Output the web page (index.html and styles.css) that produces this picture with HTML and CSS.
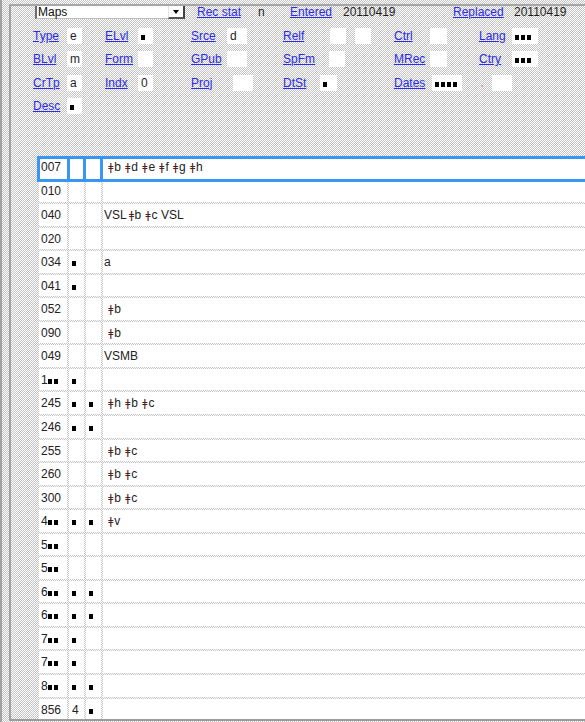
FILE: index.html
```html
<!DOCTYPE html>
<html>
<head>
<meta charset="utf-8">
<link rel="stylesheet" href="styles.css">
</head>
<body>
<div class="app">
  <div class="frame">
    <div class="topbar">
      <div class="cell-sel">
        <div class="select"><span class="sel-text">Maps</span><span class="sel-btn"><i class="tri"></i></span></div>
      </div>
      <a class="lnk">Rec stat</a><span>n</span><a class="lnk">Entered</a><span>20110419</span><a class="lnk">Replaced</a><span>20110419</span>
    </div>

    <div class="fixed">
      <a class="lnk">Type</a><div><span class="v w15">e</span></div>
      <a class="lnk">ELvl</a><div><span class="v w15 off1"><i class="sq"></i></span></div>
      <a class="lnk">Srce</a><div><span class="v w20">d</span></div>
      <a class="lnk">Relf</a><div class="pair"><span class="v w16"></span><span class="v w16"></span></div>
      <a class="lnk">Ctrl</a><div><span class="v w17"></span></div>
      <a class="lnk">Lang</a><div><span class="v w26"><i class="sq"></i><i class="sq"></i><i class="sq"></i></span></div>

      <a class="lnk">BLvl</a><div><span class="v w15">m</span></div>
      <a class="lnk">Form</a><div><span class="v w15 off1"></span></div>
      <a class="lnk">GPub</a><div><span class="v w20"></span></div>
      <a class="lnk">SpFm</a><div><span class="v w16"></span></div>
      <a class="lnk">MRec</a><div><span class="v w17"></span></div>
      <a class="lnk">Ctry</a><div><span class="v w26"><i class="sq"></i><i class="sq"></i><i class="sq"></i></span></div>

      <a class="lnk">CrTp</a><div><span class="v w15">a</span></div>
      <a class="lnk">Indx</a><div><span class="v w15 off1">0</span></div>
      <a class="lnk">Proj</a><div><span class="v w20 off6"></span></div>
      <a class="lnk">DtSt</a><div><span class="v w17 back"><i class="sq"></i></span></div>
      <a class="lnk">Dates</a><div><span class="v w30 off2"><i class="sq"></i><i class="sq"></i><i class="sq"></i><i class="sq"></i></span></div>
      <div class="comma-cell"><span class="comma">,</span><span class="v w33 commabox"></span></div><div></div>

      <a class="lnk">Desc</a><div><span class="v w15"><i class="sq"></i></span></div>
    </div>

    <div class="vars">
      <div class="row sel"><span class="t">007</span><span class="i"></span><span class="i"></span><span class="d"> <b class="sf">ǂ</b>b <b class="sf">ǂ</b>d <b class="sf">ǂ</b>e <b class="sf">ǂ</b>f <b class="sf">ǂ</b>g <b class="sf">ǂ</b>h</span></div>
      <div class="row"><span class="t">010</span><span class="i"></span><span class="i"></span><span class="d"></span></div>
      <div class="row"><span class="t">040</span><span class="i"></span><span class="i"></span><span class="d">VSL <b class="sf tight">ǂ</b>b <b class="sf">ǂ</b>c VSL</span></div>
      <div class="row"><span class="t">020</span><span class="i"></span><span class="i"></span><span class="d"></span></div>
      <div class="row"><span class="t">034</span><span class="i"><i class="sq"></i></span><span class="i"></span><span class="d">a</span></div>
      <div class="row"><span class="t">041</span><span class="i"><i class="sq"></i></span><span class="i"></span><span class="d"></span></div>
      <div class="row"><span class="t">052</span><span class="i"></span><span class="i"></span><span class="d"> <b class="sf">ǂ</b>b</span></div>
      <div class="row"><span class="t">090</span><span class="i"></span><span class="i"></span><span class="d"> <b class="sf">ǂ</b>b</span></div>
      <div class="row"><span class="t">049</span><span class="i"></span><span class="i"></span><span class="d">VSMB</span></div>
      <div class="row"><span class="t">1<i class="sq"></i><i class="sq"></i></span><span class="i"><i class="sq"></i></span><span class="i"></span><span class="d"></span></div>
      <div class="row"><span class="t">245</span><span class="i"><i class="sq"></i></span><span class="i"><i class="sq"></i></span><span class="d"> <b class="sf">ǂ</b>h <b class="sf">ǂ</b>b <b class="sf">ǂ</b>c</span></div>
      <div class="row"><span class="t">246</span><span class="i"><i class="sq"></i></span><span class="i"><i class="sq"></i></span><span class="d"></span></div>
      <div class="row"><span class="t">255</span><span class="i"></span><span class="i"></span><span class="d"> <b class="sf">ǂ</b>b <b class="sf">ǂ</b>c</span></div>
      <div class="row"><span class="t">260</span><span class="i"></span><span class="i"></span><span class="d"> <b class="sf">ǂ</b>b <b class="sf">ǂ</b>c</span></div>
      <div class="row"><span class="t">300</span><span class="i"></span><span class="i"></span><span class="d"> <b class="sf">ǂ</b>b <b class="sf">ǂ</b>c</span></div>
      <div class="row"><span class="t">4<i class="sq"></i><i class="sq"></i></span><span class="i"><i class="sq"></i></span><span class="i"><i class="sq"></i></span><span class="d"> <b class="sf">ǂ</b>v</span></div>
      <div class="row"><span class="t">5<i class="sq"></i><i class="sq"></i></span><span class="i"></span><span class="i"></span><span class="d"></span></div>
      <div class="row"><span class="t">5<i class="sq"></i><i class="sq"></i></span><span class="i"></span><span class="i"></span><span class="d"></span></div>
      <div class="row"><span class="t">6<i class="sq"></i><i class="sq"></i></span><span class="i"><i class="sq"></i></span><span class="i"><i class="sq"></i></span><span class="d"></span></div>
      <div class="row"><span class="t">6<i class="sq"></i><i class="sq"></i></span><span class="i"><i class="sq"></i></span><span class="i"><i class="sq"></i></span><span class="d"></span></div>
      <div class="row"><span class="t">7<i class="sq"></i><i class="sq"></i></span><span class="i"><i class="sq"></i></span><span class="i"></span><span class="d"></span></div>
      <div class="row"><span class="t">7<i class="sq"></i><i class="sq"></i></span><span class="i"><i class="sq"></i></span><span class="i"></span><span class="d"></span></div>
      <div class="row"><span class="t">8<i class="sq"></i><i class="sq"></i></span><span class="i"><i class="sq"></i></span><span class="i"><i class="sq"></i></span><span class="d"></span></div>
      <div class="row"><span class="t">856</span><span class="i">4</span><span class="i"><i class="sq"></i></span><span class="d"></span></div>
    </div>
  </div>
</div>
</body>
</html>
```

FILE: styles.css
```css
html, body {
  margin: 0;
  padding: 0;
  height: 722px;
  overflow: hidden;
}
body {
  background: repeating-conic-gradient(#c4c4c4 0 25%, #ffffff 0 50%) 0 0 / 2px 2px;
  font-family: "Liberation Sans", Arial, sans-serif;
  font-size: 12px;
  color: #1e1e1e;
}
.app {
  height: 722px;
  box-sizing: border-box;
  border-left: 2px solid #a2a2a2;
  padding: 4px 0 0 7px;
}
.frame {
  width: 720px;
  height: 717px;
  box-sizing: border-box;
  border-top: 2px solid #a6a6a6;
  border-left: 2px solid #a2a2a2;
  border-bottom: 2px solid #9c9c9c;
  overflow: hidden;
}
.lnk {
  color: #2b2bea;
  text-decoration: underline;
  white-space: nowrap;
}

/* top bar */
.topbar {
  display: grid;
  grid-template-columns: 162px 61px 32px 53px 110px 61px auto;
  padding-left: 24px;
  height: 13px;
  line-height: 13px;
  white-space: nowrap;
}
.select {
  width: 150px;
  height: 13px;
  box-sizing: border-box;
  display: flex;
  background: #fff;
  border-left: 2px solid #6c6c6c;
  border-bottom: 1px solid #bdbdbd;
}
.sel-text {
  flex: 1;
  padding-left: 1px;
  line-height: 12px;
  color: #111;
}
.sel-btn {
  width: 17px;
  height: 13px;
  box-sizing: border-box;
  display: flex;
  align-items: center;
  justify-content: center;
  border-left: 1px solid #e4e4e4;
  border-right: 2px solid #404040;
  border-bottom: 2px solid #555;
  background: #fff;
}
.tri {
  width: 0;
  height: 0;
  border-left: 3px solid transparent;
  border-right: 3px solid transparent;
  border-top: 4px solid #000;
}

/* fixed fields */
.fixed {
  display: grid;
  grid-template-columns: 34px 38px 32px 54px 36px 56px 46px 65px 36px 49px 33px 1fr;
  grid-auto-rows: 16px;
  row-gap: 7.33px;
  margin-top: 9px;
  padding-left: 22px;
  line-height: 16px;
}
.v {
  display: inline-block;
  background: #fff;
  height: 16px;
  padding-left: 3px;
  box-sizing: border-box;
  vertical-align: top;
}
.w15 { width: 15px; }
.w16 { width: 16px; }
.w17 { width: 17px; }
.w20 { width: 20px; }
.w26 { width: 26px; }
.w30 { width: 30px; }
.w33 { width: 33px; }
.off1 { margin-left: 1px; }
.off2 { margin-left: 2px; }
.off6 { margin-left: 6px; }
.back { margin-left: -9px; }
.pair {
  display: flex;
  gap: 9px;
  padding-left: 1px;
}
.comma-cell {
  display: flex;
  white-space: nowrap;
}
.comma {
  color: #c85050;
  padding-left: 2px;
  font-size: 9px;
}
.commabox { margin-left: 8px; }

.sq {
  display: inline-block;
  width: 4px;
  height: 5px;
  background: #000;
  margin-right: 2px;
  vertical-align: baseline;
}

/* variable fields */
.vars {
  display: flex;
  flex-direction: column;
  gap: 2px;
  margin: 42px 0 0 26px;
}
.row {
  display: grid;
  grid-template-columns: 28px 15px 15px 1fr;
  column-gap: 2px;
  height: 21.55px;
  margin-left: 2px;
  flex-shrink: 0;
}
.row > span {
  background: #fff;
  padding-top: 4px;
  line-height: 14px;
  white-space: pre;
  color: #222;
}
.row .t { padding-left: 2px; }
.row .i { padding-left: 3px; }
.row .d { padding-left: 1px; }
.row.sel {
  background: #3896f6;
  height: 26px;
  box-sizing: border-box;
  padding: 3px;
  column-gap: 3px;
  grid-template-columns: 27px 13px 14px 1fr;
  margin: 0 0 -3.5px 0;
  position: relative;
  z-index: 1;
}
.row.sel > span {
  padding-top: 1px;
}
.row.sel .t { padding-left: 1px; }
.sf {
  display: inline-block;
  width: 7px;
  text-align: center;
  font-family: "DejaVu Sans", sans-serif;
  font-weight: normal;
  font-size: 11px;
  color: #4a2020;
}
.sf.tight {
  width: 6px;
  margin-left: -1px;
}
```
